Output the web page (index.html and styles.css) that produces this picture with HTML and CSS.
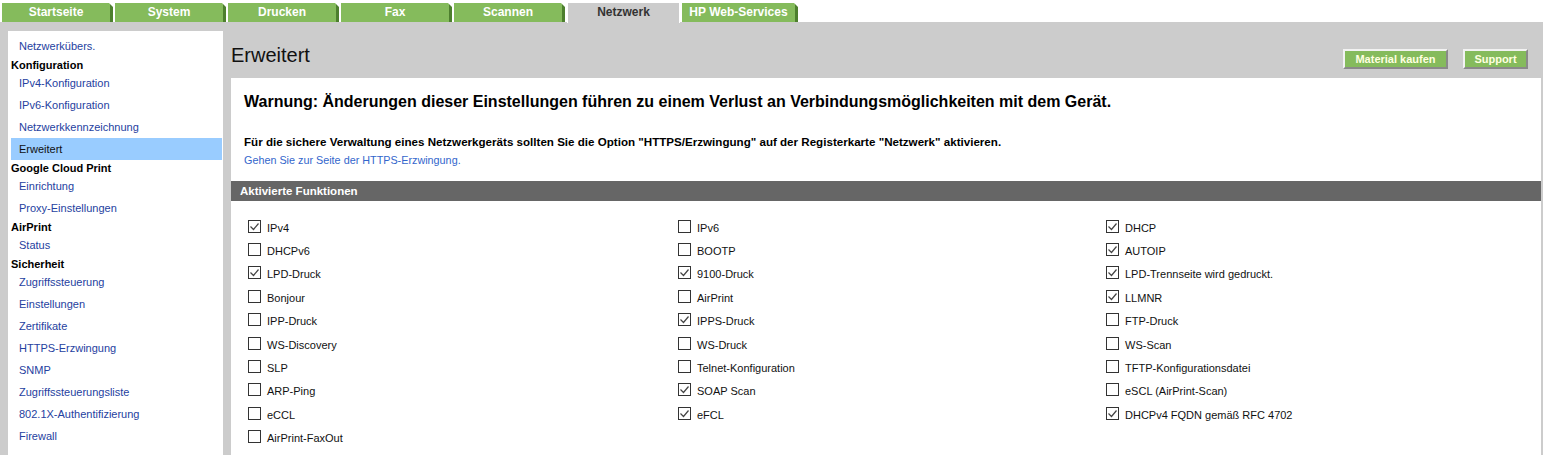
FILE: index.html
```html
<!DOCTYPE html>
<html lang="de">
<head>
    <meta charset="UTF-8">
    <title>Netzwerk - Erweitert</title>
    <link rel="stylesheet" href="styles.css">
</head>
<body>
    <div class="tabs">
        <div class="tab">Startseite</div>
        <div class="tab">System</div>
        <div class="tab">Drucken</div>
        <div class="tab">Fax</div>
        <div class="tab">Scannen</div>
        <div class="tab active">Netzwerk</div>
        <div class="tab wide">HP Web-Services</div>
    </div>

    <div class="page">
        <div class="nav">
            <a class="nav-link">Netzwerkübers.</a>
            <div class="nav-head">Konfiguration</div>
            <a class="nav-link">IPv4-Konfiguration</a>
            <a class="nav-link">IPv6-Konfiguration</a>
            <a class="nav-link">Netzwerkkennzeichnung</a>
            <a class="nav-link selected">Erweitert</a>
            <div class="nav-head">Google Cloud Print</div>
            <a class="nav-link">Einrichtung</a>
            <a class="nav-link">Proxy-Einstellungen</a>
            <div class="nav-head">AirPrint</div>
            <a class="nav-link">Status</a>
            <div class="nav-head">Sicherheit</div>
            <a class="nav-link">Zugriffssteuerung</a>
            <a class="nav-link">Einstellungen</a>
            <a class="nav-link">Zertifikate</a>
            <a class="nav-link">HTTPS-Erzwingung</a>
            <a class="nav-link">SNMP</a>
            <a class="nav-link">Zugriffssteuerungsliste</a>
            <a class="nav-link">802.1X-Authentifizierung</a>
            <a class="nav-link">Firewall</a>
        </div>

        <div class="main">
            <div class="title-row">
                <h1>Erweitert</h1>
                <div class="actions">
                    <button class="btn btn-shop">Material kaufen</button>
                    <button class="btn btn-support">Support</button>
                </div>
            </div>

            <div class="content">
                <h2>Warnung: Änderungen dieser Einstellungen führen zu einem Verlust an Verbindungsmöglichkeiten mit dem Gerät.</h2>
                <p class="note">Für die sichere Verwaltung eines Netzwerkgeräts sollten Sie die Option "HTTPS/Erzwingung" auf der Registerkarte "Netzwerk" aktivieren.</p>
                <a class="https-link">Gehen Sie zur Seite der HTTPS-Erzwingung.</a>

                <div class="section-bar">Aktivierte Funktionen</div>

                <div class="options">
                    <label class="opt"><span class="box"><svg viewBox="0 0 11 11"><path d="M1.5 5.5 L4.5 8.5 L9.5 2.5"/></svg></span>IPv4</label>
                    <label class="opt"><span class="box"></span>IPv6</label>
                    <label class="opt"><span class="box"><svg viewBox="0 0 11 11"><path d="M1.5 5.5 L4.5 8.5 L9.5 2.5"/></svg></span>DHCP</label>

                    <label class="opt"><span class="box"></span>DHCPv6</label>
                    <label class="opt"><span class="box"></span>BOOTP</label>
                    <label class="opt"><span class="box"><svg viewBox="0 0 11 11"><path d="M1.5 5.5 L4.5 8.5 L9.5 2.5"/></svg></span>AUTOIP</label>

                    <label class="opt"><span class="box"><svg viewBox="0 0 11 11"><path d="M1.5 5.5 L4.5 8.5 L9.5 2.5"/></svg></span>LPD-Druck</label>
                    <label class="opt"><span class="box"><svg viewBox="0 0 11 11"><path d="M1.5 5.5 L4.5 8.5 L9.5 2.5"/></svg></span>9100-Druck</label>
                    <label class="opt"><span class="box"><svg viewBox="0 0 11 11"><path d="M1.5 5.5 L4.5 8.5 L9.5 2.5"/></svg></span>LPD-Trennseite wird gedruckt.</label>

                    <label class="opt"><span class="box"></span>Bonjour</label>
                    <label class="opt"><span class="box"></span>AirPrint</label>
                    <label class="opt"><span class="box"><svg viewBox="0 0 11 11"><path d="M1.5 5.5 L4.5 8.5 L9.5 2.5"/></svg></span>LLMNR</label>

                    <label class="opt"><span class="box"></span>IPP-Druck</label>
                    <label class="opt"><span class="box"><svg viewBox="0 0 11 11"><path d="M1.5 5.5 L4.5 8.5 L9.5 2.5"/></svg></span>IPPS-Druck</label>
                    <label class="opt"><span class="box"></span>FTP-Druck</label>

                    <label class="opt"><span class="box"></span>WS-Discovery</label>
                    <label class="opt"><span class="box"></span>WS-Druck</label>
                    <label class="opt"><span class="box"></span>WS-Scan</label>

                    <label class="opt"><span class="box"></span>SLP</label>
                    <label class="opt"><span class="box"></span>Telnet-Konfiguration</label>
                    <label class="opt"><span class="box"></span>TFTP-Konfigurationsdatei</label>

                    <label class="opt"><span class="box"></span>ARP-Ping</label>
                    <label class="opt"><span class="box"><svg viewBox="0 0 11 11"><path d="M1.5 5.5 L4.5 8.5 L9.5 2.5"/></svg></span>SOAP Scan</label>
                    <label class="opt"><span class="box"></span>eSCL (AirPrint-Scan)</label>

                    <label class="opt"><span class="box"></span>eCCL</label>
                    <label class="opt"><span class="box"><svg viewBox="0 0 11 11"><path d="M1.5 5.5 L4.5 8.5 L9.5 2.5"/></svg></span>eFCL</label>
                    <label class="opt"><span class="box"><svg viewBox="0 0 11 11"><path d="M1.5 5.5 L4.5 8.5 L9.5 2.5"/></svg></span>DHCPv4 FQDN gemäß RFC 4702</label>

                    <label class="opt"><span class="box"></span>AirPrint-FaxOut</label>
                </div>
            </div>
        </div>
    </div>
</body>
</html>
```

FILE: styles.css
```css
body {
    margin: 0;
    font-family: "Liberation Sans", Arial, sans-serif;
    font-size: 11px;
    color: #000;
    background-color: #fff;
}

/* top tabs */
.tabs {
    display: flex;
    gap: 2px;
    padding: 3px 0 0 2px;
    height: 19px;
}

.tab {
    position: relative;
    width: 108px;
    height: 19px;
    line-height: 18px;
    background-color: #85bb5c;
    border-right: 3px solid #4d7f2e;
    color: #fff;
    font-weight: bold;
    font-size: 12px;
    text-align: center;
}

.tab::after {
    content: "";
    position: absolute;
    top: 0;
    right: -3px;
    border-top: 4px solid #fff;
    border-left: 4px solid transparent;
}

.tab.active {
    margin-top: -1px;
    height: 20px;
    width: 111px;
    background-color: #cccccc;
    border: 1px solid #fff;
    border-bottom: none;
    color: #333;
}

.tab.active::after {
    display: none;
}

.tab.wide {
    width: 113px;
}

/* page body */
.page {
    display: flex;
    gap: 8px;
    background-color: #cccccc;
    padding: 9px 2px 0 8px;
    min-height: 424px;
}

.nav {
    width: 211px;
    background-color: #fff;
    padding: 4px 1px 0 3px;
}

.nav-link {
    display: block;
    height: 22px;
    line-height: 22px;
    padding-left: 8px;
    color: #2541a0;
    font-size: 11px;
}

.nav-link.selected {
    background-color: #99ccff;
    color: #111;
}

.nav-head {
    padding-top: 2px;
    height: 13px;
    line-height: 13px;
    font-weight: bold;
    font-size: 11px;
}

.main {
    flex: 1;
    display: flex;
    flex-direction: column;
}

.title-row {
    display: flex;
    justify-content: space-between;
    align-items: center;
    height: 47px;
}

h1 {
    margin: 0;
    font-size: 20px;
    font-weight: normal;
    color: #111;
    padding-top: 2px;
}

.actions {
    display: flex;
    gap: 15px;
    padding-right: 13px;
    padding-top: 8px;
}

.btn {
    height: 20px;
    padding: 0;
    background-color: #85bb5c;
    color: #ffffe0;
    font-family: "Liberation Sans", Arial, sans-serif;
    font-weight: bold;
    font-size: 11px;
    border: 2px solid;
    border-color: #f2f2f2 #8a8a8a #8a8a8a #f2f2f2;
}

.btn-shop {
    width: 105px;
}

.btn-support {
    width: 65px;
}

.content {
    flex: 1;
    background-color: #fff;
}

h2 {
    margin: 0;
    padding: 14px 0 0 13px;
    font-size: 16px;
    line-height: 20px;
}

.note {
    margin: 22px 0 0 13px;
    font-weight: bold;
    font-size: 11.6px;
    line-height: 16px;
}

.https-link {
    display: block;
    margin: 2px 0 0 13px;
    line-height: 16px;
    font-size: 10.8px;
    color: #3366cc;
}

.section-bar {
    margin-top: 13px;
    height: 20px;
    line-height: 20px;
    padding-left: 9px;
    background-color: #666666;
    color: #fff;
    font-weight: bold;
    font-size: 11.5px;
}

.options {
    display: grid;
    grid-template-columns: 430px 428px 1fr;
    grid-auto-rows: 23.4px;
    padding: 15px 0 0 17px;
}

.opt {
    display: flex;
    align-items: center;
    gap: 6px;
    color: #111;
}

.box {
    width: 11px;
    height: 11px;
    border: 1px solid #333;
    margin-top: -3px;
    display: flex;
}

.box svg {
    width: 11px;
    height: 11px;
    fill: none;
    stroke: #444;
    stroke-width: 1.2;
}
```
